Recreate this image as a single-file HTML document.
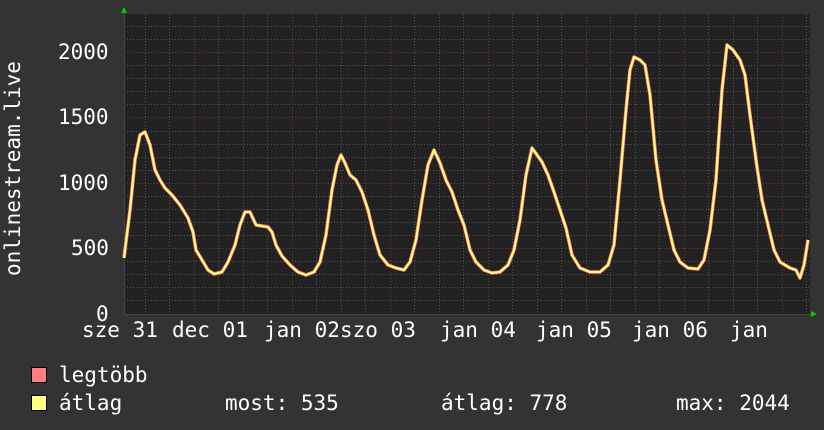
<!DOCTYPE html>
<html><head><meta charset="utf-8"><style>
html,body{margin:0;padding:0;background:#333;}
body{width:824px;height:430px;position:relative;overflow:hidden;font-family:"DejaVu Sans Mono","Liberation Mono",monospace;color:#fff;}
.t{position:absolute;font-size:21px;line-height:20px;white-space:pre;}
.sw{position:absolute;width:14px;height:14px;border:1px solid #000;}
</style></head><body>
<svg width="824" height="430" style="position:absolute;left:0;top:0">
<rect x="124" y="14" width="686" height="300" fill="#222"/>
<g stroke="#555" stroke-width="1" stroke-dasharray="1,2">
<line x1="124" x2="810" y1="300.5" y2="300.5"/><line x1="124" x2="810" y1="287.5" y2="287.5"/><line x1="124" x2="810" y1="274.5" y2="274.5"/><line x1="124" x2="810" y1="261.5" y2="261.5"/>
<line x1="124" x2="810" y1="235.5" y2="235.5"/><line x1="124" x2="810" y1="222.5" y2="222.5"/><line x1="124" x2="810" y1="209.5" y2="209.5"/><line x1="124" x2="810" y1="196.5" y2="196.5"/>
<line x1="124" x2="810" y1="170.5" y2="170.5"/><line x1="124" x2="810" y1="157.5" y2="157.5"/><line x1="124" x2="810" y1="144.5" y2="144.5"/><line x1="124" x2="810" y1="131.5" y2="131.5"/>
<line x1="124" x2="810" y1="104.5" y2="104.5"/><line x1="124" x2="810" y1="91.5" y2="91.5"/><line x1="124" x2="810" y1="78.5" y2="78.5"/><line x1="124" x2="810" y1="65.5" y2="65.5"/>
<line x1="124" x2="810" y1="39.5" y2="39.5"/><line x1="124" x2="810" y1="26.5" y2="26.5"/>
<line y1="14" y2="314" x1="145.5" x2="145.5"/><line y1="14" y2="314" x1="169.5" x2="169.5"/><line y1="14" y2="314" x1="218.5" x2="218.5"/><line y1="14" y2="314" x1="243.5" x2="243.5"/><line y1="14" y2="314" x1="267.5" x2="267.5"/>
<line y1="14" y2="314" x1="316.5" x2="316.5"/><line y1="14" y2="314" x1="341.5" x2="341.5"/><line y1="14" y2="314" x1="365.5" x2="365.5"/>
<line y1="14" y2="314" x1="414.5" x2="414.5"/><line y1="14" y2="314" x1="439.5" x2="439.5"/><line y1="14" y2="314" x1="463.5" x2="463.5"/>
<line y1="14" y2="314" x1="512.5" x2="512.5"/><line y1="14" y2="314" x1="537.5" x2="537.5"/><line y1="14" y2="314" x1="561.5" x2="561.5"/>
<line y1="14" y2="314" x1="610.5" x2="610.5"/><line y1="14" y2="314" x1="635.5" x2="635.5"/><line y1="14" y2="314" x1="659.5" x2="659.5"/>
<line y1="14" y2="314" x1="708.5" x2="708.5"/><line y1="14" y2="314" x1="733.5" x2="733.5"/><line y1="14" y2="314" x1="757.5" x2="757.5"/><line y1="14" y2="314" x1="806.5" x2="806.5"/>
</g>
<g stroke="#7a3333" stroke-width="1" stroke-dasharray="1,2">
<line x1="124" x2="810" y1="52.5" y2="52.5"/><line x1="124" x2="810" y1="117.5" y2="117.5"/><line x1="124" x2="810" y1="183.5" y2="183.5"/><line x1="124" x2="810" y1="248.5" y2="248.5"/>
<line y1="14" y2="314" x1="194.5" x2="194.5"/><line y1="14" y2="314" x1="292.5" x2="292.5"/><line y1="14" y2="314" x1="390.5" x2="390.5"/><line y1="14" y2="314" x1="488.5" x2="488.5"/><line y1="14" y2="314" x1="586.5" x2="586.5"/><line y1="14" y2="314" x1="684.5" x2="684.5"/><line y1="14" y2="314" x1="782.5" x2="782.5"/>
</g>
<line x1="124" x2="816" y1="314.5" y2="314.5" stroke="#444"/>
<line x1="124.5" x2="124.5" y1="8" y2="314" stroke="#444"/>
<polygon points="121,13 124,7 127,13" fill="#0c0"/>
<polygon points="811,311 817,314 811,317" fill="#0c0"/>
<g fill="none" stroke-linejoin="round">
<polyline stroke="#ff7f7f" stroke-width="3.5" points="124,258 130,210 135,160 140,135 145,132 150,145 155,170 160,180 165,188 172,195 180,205 188,218 193,232 196,250 202,260 208,270 214,274 222,272 228,262 235,245 240,225 245,212 250,212 256,225 262,226 268,227 272,232 276,245 282,256 290,265 298,272 306,275 314,272 320,262 326,235 332,190 337,165 341,155 345,163 350,175 356,180 362,192 368,210 374,235 380,255 388,265 396,268 404,270 410,262 416,240 422,200 428,165 434,150 440,163 446,180 452,192 458,210 464,225 470,250 476,262 484,270 492,273 500,272 508,265 514,250 520,220 526,175 532,148 537,155 542,162 548,175 554,192 560,210 566,228 572,255 580,268 590,272 600,272 608,265 614,245 620,180 626,110 630,70 634,57 640,60 645,65 650,95 656,160 662,200 668,225 674,250 680,262 688,268 698,269 704,260 710,230 716,180 722,90 727,45 733,50 740,60 745,75 750,115 756,160 762,200 768,225 774,250 780,262 790,268 796,270 800,278 804,265 808,240"/>
<polyline stroke="#ffff7f" stroke-width="2" points="124,258 130,210 135,160 140,135 145,132 150,145 155,170 160,180 165,188 172,195 180,205 188,218 193,232 196,250 202,260 208,270 214,274 222,272 228,262 235,245 240,225 245,212 250,212 256,225 262,226 268,227 272,232 276,245 282,256 290,265 298,272 306,275 314,272 320,262 326,235 332,190 337,165 341,155 345,163 350,175 356,180 362,192 368,210 374,235 380,255 388,265 396,268 404,270 410,262 416,240 422,200 428,165 434,150 440,163 446,180 452,192 458,210 464,225 470,250 476,262 484,270 492,273 500,272 508,265 514,250 520,220 526,175 532,148 537,155 542,162 548,175 554,192 560,210 566,228 572,255 580,268 590,272 600,272 608,265 614,245 620,180 626,110 630,70 634,57 640,60 645,65 650,95 656,160 662,200 668,225 674,250 680,262 688,268 698,269 704,260 710,230 716,180 722,90 727,45 733,50 740,60 745,75 750,115 756,160 762,200 768,225 774,250 780,262 790,268 796,270 800,278 804,265 808,240"/>
</g>
</svg>
<div class="t" style="left:3px;top:276px;transform:rotate(-90deg);transform-origin:0 0;">onlinestream.live</div>
<div class="t" style="left:58px;top:42px">2000</div>
<div class="t" style="left:58px;top:107px">1500</div>
<div class="t" style="left:58px;top:173px">1000</div>
<div class="t" style="left:71px;top:238px">500</div>
<div class="t" style="left:96px;top:304px">0</div>
<div class="t" style="left:82px;top:320px">sze 31</div>
<div class="t" style="left:172px;top:320px">dec 01</div>
<div class="t" style="left:264px;top:320px">jan 02</div>
<div class="t" style="left:340px;top:320px">szo 03</div>
<div class="t" style="left:440px;top:320px">jan 04</div>
<div class="t" style="left:536px;top:320px">jan 05</div>
<div class="t" style="left:632px;top:320px">jan 06</div>
<div class="t" style="left:730px;top:320px">jan</div>
<div class="sw" style="left:31px;top:367px;background:#ff7f7f"></div>
<div class="t" style="left:59px;top:365px">legtöbb</div>
<div class="sw" style="left:31px;top:395px;background:#ffff7f"></div>
<div class="t" style="left:59px;top:393px">átlag</div>
<div class="t" style="left:225px;top:393px">most: 535</div>
<div class="t" style="left:441px;top:393px">átlag: 778</div>
<div class="t" style="left:676px;top:393px">max: 2044</div>
</body></html>
